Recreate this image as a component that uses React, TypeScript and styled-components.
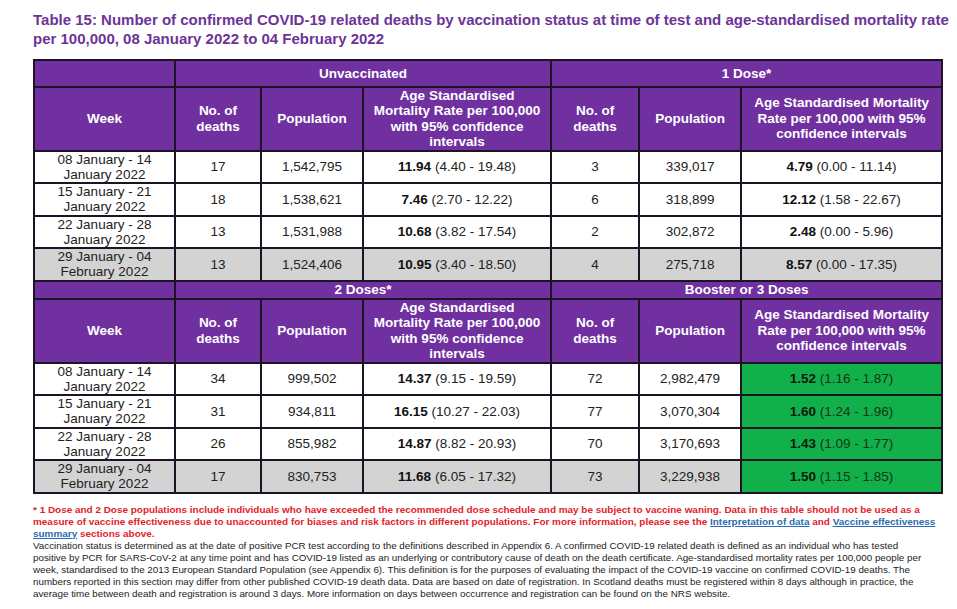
import React from "react";
import styled, { createGlobalStyle } from "styled-components";

const Global = createGlobalStyle`
  html, body { margin: 0; padding: 0; background: #ffffff; }
  body { font-family: "Liberation Sans", Arial, sans-serif; }
`;

const Page = styled.div`
  width: 957px;
  height: 609px;
  box-sizing: border-box;
  padding: 10px 0 0 33px;
  overflow: hidden;
  background: #fff;
`;

const Title = styled.h1`
  margin: 0 0 11px 0;
  font-size: 15px;
  line-height: 19px;
  font-weight: bold;
  color: #6c3497;
  white-space: nowrap;
`;

const Table = styled.table`
  width: 908px;
  table-layout: fixed;
  border-collapse: collapse;
  border: 2px solid #1c1424;
  font-size: 13.5px;
`;

const GroupRow = styled.tr<{ $h: number }>`
  height: ${(p) => p.$h}px;
`;

const GroupCell = styled.th`
  background: #7030a0;
  color: #fff;
  font-weight: bold;
  text-align: center;
  vertical-align: middle;
  border: 2px solid #1c1424;
  padding: 0;
  line-height: 15px;
`;

const HeadRow = styled.tr`
  height: 63.5px;
`;

const HeadCell = styled.th`
  background: #7030a0;
  color: #fff;
  font-weight: bold;
  text-align: center;
  vertical-align: middle;
  border: 2px solid #1c1424;
  padding: 0 7px;
  line-height: 15.5px;
`;

const DataRow = styled.tr<{ $grey?: boolean }>`
  height: 32.5px;
  background: ${(p) => (p.$grey ? "#d3d3d3" : "#ffffff")};
`;

const Cell = styled.td<{ $green?: boolean }>`
  border: 2px solid #1c1424;
  padding: 0 4px;
  text-align: center;
  vertical-align: middle;
  line-height: 15px;
  color: ${(p) => (p.$green ? "#143518" : "#222")};
  background: ${(p) => (p.$green ? "#12b04a" : "transparent")};
`;

const Strong = styled.b<{ $green?: boolean }>`
  font-weight: bold;
  color: ${(p) => (p.$green ? "#0a1a0c" : "#111")};
`;

const Notes = styled.div`
  margin-top: 10px;
  width: 912px;
  line-height: 12px;
  white-space: nowrap;
`;

const Warning = styled.p`
  margin: 0;
  font-size: 9.95px;
  color: #e3202b;
  font-weight: bold;
`;

const Link = styled.a`
  color: #2a6bb3;
  text-decoration: underline;
`;

const Body = styled.p`
  margin: 0;
  font-size: 9.8px;
  color: #222;
`;

type Row = {
  week: [string, string];
  deaths: string;
  pop: string;
  rate: string;
  ci: string;
  deaths2: string;
  pop2: string;
  rate2: string;
  ci2: string;
};

const weeks: [string, string][] = [
  ["08 January - 14", "January 2022"],
  ["15 January - 21", "January 2022"],
  ["22 January - 28", "January 2022"],
  ["29 January - 04", "February 2022"],
];

const first: Row[] = [
  { week: weeks[0], deaths: "17", pop: "1,542,795", rate: "11.94", ci: "(4.40 - 19.48)", deaths2: "3", pop2: "339,017", rate2: "4.79", ci2: "(0.00 - 11.14)" },
  { week: weeks[1], deaths: "18", pop: "1,538,621", rate: "7.46", ci: "(2.70 - 12.22)", deaths2: "6", pop2: "318,899", rate2: "12.12", ci2: "(1.58 - 22.67)" },
  { week: weeks[2], deaths: "13", pop: "1,531,988", rate: "10.68", ci: "(3.82 - 17.54)", deaths2: "2", pop2: "302,872", rate2: "2.48", ci2: "(0.00 - 5.96)" },
  { week: weeks[3], deaths: "13", pop: "1,524,406", rate: "10.95", ci: "(3.40 - 18.50)", deaths2: "4", pop2: "275,718", rate2: "8.57", ci2: "(0.00 - 17.35)" },
];

const second: Row[] = [
  { week: weeks[0], deaths: "34", pop: "999,502", rate: "14.37", ci: "(9.15 - 19.59)", deaths2: "72", pop2: "2,982,479", rate2: "1.52", ci2: "(1.16 - 1.87)" },
  { week: weeks[1], deaths: "31", pop: "934,811", rate: "16.15", ci: "(10.27 - 22.03)", deaths2: "77", pop2: "3,070,304", rate2: "1.60", ci2: "(1.24 - 1.96)" },
  { week: weeks[2], deaths: "26", pop: "855,982", rate: "14.87", ci: "(8.82 - 20.93)", deaths2: "70", pop2: "3,170,693", rate2: "1.43", ci2: "(1.09 - 1.77)" },
  { week: weeks[3], deaths: "17", pop: "830,753", rate: "11.68", ci: "(6.05 - 17.32)", deaths2: "73", pop2: "3,229,938", rate2: "1.50", ci2: "(1.15 - 1.85)" },
];

const colWidths = [141, 86, 102, 188, 88, 102, 201];

function Header({ left, right, h }: { left: string; right: string; h: number }) {
  return (
    <>
      <GroupRow $h={h}>
        <GroupCell />
        <GroupCell colSpan={3}>{left}</GroupCell>
        <GroupCell colSpan={3}>{right}</GroupCell>
      </GroupRow>
      <HeadRow>
        <HeadCell>Week</HeadCell>
        <HeadCell>No. of deaths</HeadCell>
        <HeadCell>Population</HeadCell>
        <HeadCell>Age Standardised Mortality Rate per 100,000 with 95% confidence intervals</HeadCell>
        <HeadCell>No. of deaths</HeadCell>
        <HeadCell>Population</HeadCell>
        <HeadCell>Age Standardised Mortality Rate per 100,000 with 95% confidence intervals</HeadCell>
      </HeadRow>
    </>
  );
}

function Rows({ rows, green }: { rows: Row[]; green?: boolean }) {
  return (
    <>
      {rows.map((r, i) => (
        <DataRow key={i} $grey={i === 3}>
          <Cell>
            {r.week[0]}
            <br />
            {r.week[1]}
          </Cell>
          <Cell>{r.deaths}</Cell>
          <Cell>{r.pop}</Cell>
          <Cell>
            <Strong>{r.rate}</Strong> {r.ci}
          </Cell>
          <Cell>{r.deaths2}</Cell>
          <Cell>{r.pop2}</Cell>
          <Cell $green={green}>
            <Strong $green={green}>{r.rate2}</Strong> {r.ci2}
          </Cell>
        </DataRow>
      ))}
    </>
  );
}

export default function App() {
  return (
    <Page>
      <Global />
      <Title>
        Table 15: Number of confirmed COVID-19 related deaths by vaccination status at time of test and age-standardised mortality rate
        <br />
        per 100,000, 08 January 2022 to 04 February 2022
      </Title>
      <Table>
        <colgroup>
          {colWidths.map((w, i) => (
            <col key={i} style={{ width: w }} />
          ))}
        </colgroup>
        <tbody>
          <Header left="Unvaccinated" right="1 Dose*" h={26.5} />
          <Rows rows={first} />
          <Header left="2 Doses*" right="Booster or 3 Doses" h={18} />
          <Rows rows={second} green />
        </tbody>
      </Table>
      <Notes>
        <Warning>
          * 1 Dose and 2 Dose populations include individuals who have exceeded the recommended dose schedule and may be subject to vaccine waning. Data in this table should not be used as a
          <br />
          measure of vaccine effectiveness due to unaccounted for biases and risk factors in different populations. For more information, please see the{" "}
          <Link>Interpretation of data</Link> and <Link>Vaccine effectiveness</Link>
          <br />
          <Link>summary</Link> sections above.
        </Warning>
        <Body>
          Vaccination status is determined as at the date of positive PCR test according to the definitions described in Appendix 6. A confirmed COVID-19 related death is defined as an individual who has tested
          <br />
          positive by PCR for SARS-CoV-2 at any time point and has COVID-19 listed as an underlying or contributory cause of death on the death certificate. Age-standardised mortality rates per 100,000 people per
          <br />
          week, standardised to the 2013 European Standard Population (see Appendix 6). This definition is for the purposes of evaluating the impact of the COVID-19 vaccine on confirmed COVID-19 deaths. The
          <br />
          numbers reported in this section may differ from other published COVID-19 death data. Data are based on date of registration. In Scotland deaths must be registered within 8 days although in practice, the
          <br />
          average time between death and registration is around 3 days. More information on days between occurrence and registration can be found on the NRS website.
        </Body>
      </Notes>
    </Page>
  );
}
